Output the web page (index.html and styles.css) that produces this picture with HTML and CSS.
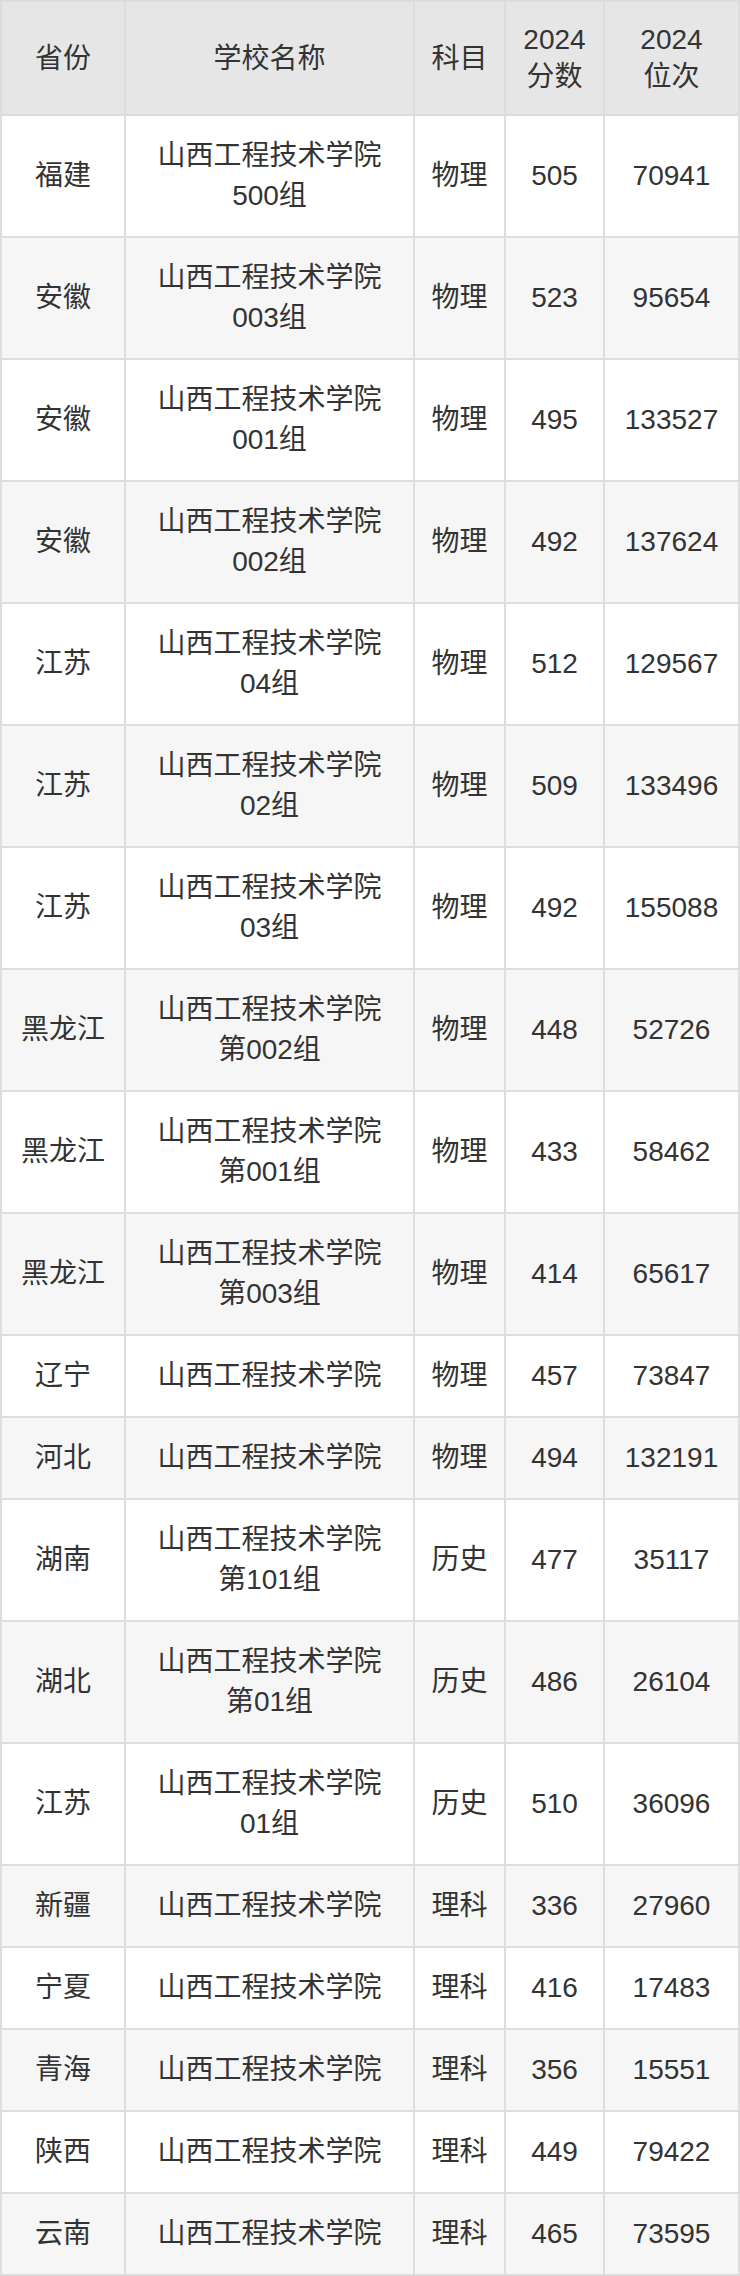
FILE: index.html
```html
<!DOCTYPE html>
<html lang="zh-CN">
<head>
<meta charset="utf-8">
<title>山西工程技术学院 2024 录取分数</title>
<link rel="stylesheet" href="styles.css">
</head>
<body>
<div class="table">
  <div class="cell head">省份</div>
  <div class="cell head">学校名称</div>
  <div class="cell head">科目</div>
  <div class="cell head">2024<br>分数</div>
  <div class="cell head">2024<br>位次</div>

  <div class="cell">福建</div><div class="cell">山西工程技术学院<br>500组</div><div class="cell">物理</div><div class="cell">505</div><div class="cell">70941</div>
  <div class="cell alt">安徽</div><div class="cell alt">山西工程技术学院<br>003组</div><div class="cell alt">物理</div><div class="cell alt">523</div><div class="cell alt">95654</div>
  <div class="cell">安徽</div><div class="cell">山西工程技术学院<br>001组</div><div class="cell">物理</div><div class="cell">495</div><div class="cell">133527</div>
  <div class="cell alt">安徽</div><div class="cell alt">山西工程技术学院<br>002组</div><div class="cell alt">物理</div><div class="cell alt">492</div><div class="cell alt">137624</div>
  <div class="cell">江苏</div><div class="cell">山西工程技术学院<br>04组</div><div class="cell">物理</div><div class="cell">512</div><div class="cell">129567</div>
  <div class="cell alt">江苏</div><div class="cell alt">山西工程技术学院<br>02组</div><div class="cell alt">物理</div><div class="cell alt">509</div><div class="cell alt">133496</div>
  <div class="cell">江苏</div><div class="cell">山西工程技术学院<br>03组</div><div class="cell">物理</div><div class="cell">492</div><div class="cell">155088</div>
  <div class="cell alt">黑龙江</div><div class="cell alt">山西工程技术学院<br>第002组</div><div class="cell alt">物理</div><div class="cell alt">448</div><div class="cell alt">52726</div>
  <div class="cell">黑龙江</div><div class="cell">山西工程技术学院<br>第001组</div><div class="cell">物理</div><div class="cell">433</div><div class="cell">58462</div>
  <div class="cell alt">黑龙江</div><div class="cell alt">山西工程技术学院<br>第003组</div><div class="cell alt">物理</div><div class="cell alt">414</div><div class="cell alt">65617</div>
  <div class="cell">辽宁</div><div class="cell">山西工程技术学院</div><div class="cell">物理</div><div class="cell">457</div><div class="cell">73847</div>
  <div class="cell alt">河北</div><div class="cell alt">山西工程技术学院</div><div class="cell alt">物理</div><div class="cell alt">494</div><div class="cell alt">132191</div>
  <div class="cell">湖南</div><div class="cell">山西工程技术学院<br>第101组</div><div class="cell">历史</div><div class="cell">477</div><div class="cell">35117</div>
  <div class="cell alt">湖北</div><div class="cell alt">山西工程技术学院<br>第01组</div><div class="cell alt">历史</div><div class="cell alt">486</div><div class="cell alt">26104</div>
  <div class="cell">江苏</div><div class="cell">山西工程技术学院<br>01组</div><div class="cell">历史</div><div class="cell">510</div><div class="cell">36096</div>
  <div class="cell alt">新疆</div><div class="cell alt">山西工程技术学院</div><div class="cell alt">理科</div><div class="cell alt">336</div><div class="cell alt">27960</div>
  <div class="cell">宁夏</div><div class="cell">山西工程技术学院</div><div class="cell">理科</div><div class="cell">416</div><div class="cell">17483</div>
  <div class="cell alt">青海</div><div class="cell alt">山西工程技术学院</div><div class="cell alt">理科</div><div class="cell alt">356</div><div class="cell alt">15551</div>
  <div class="cell">陕西</div><div class="cell">山西工程技术学院</div><div class="cell">理科</div><div class="cell">449</div><div class="cell">79422</div>
  <div class="cell alt">云南</div><div class="cell alt">山西工程技术学院</div><div class="cell alt">理科</div><div class="cell alt">465</div><div class="cell alt">73595</div>
</div>
</body>
</html>
```

FILE: styles.css
```css
html, body {
  margin: 0;
  padding: 0;
  background: #ffffff;
}

.table {
  width: 740px;
  box-sizing: border-box;
  display: grid;
  grid-template-columns: 124px 289px 91px 99px 135px;
  border-top: 2px solid #dddddd;
  border-left: 2px solid #dddddd;
  font-family: "Liberation Sans", Arial, "Noto Sans CJK SC", sans-serif;
  font-size: 28px;
  color: #333333;
}

.cell {
  display: flex;
  align-items: center;
  justify-content: center;
  text-align: center;
  padding: 20px 0;
  line-height: 40px;
  border-right: 2px solid #dddddd;
  border-bottom: 2px solid #dddddd;
  background: #ffffff;
}

.cell.alt {
  background: #f6f6f6;
}

.cell.head {
  background: #e6e6e6;
  padding: 19px 0;
  line-height: 37px;
  min-height: 74px;
}
```
